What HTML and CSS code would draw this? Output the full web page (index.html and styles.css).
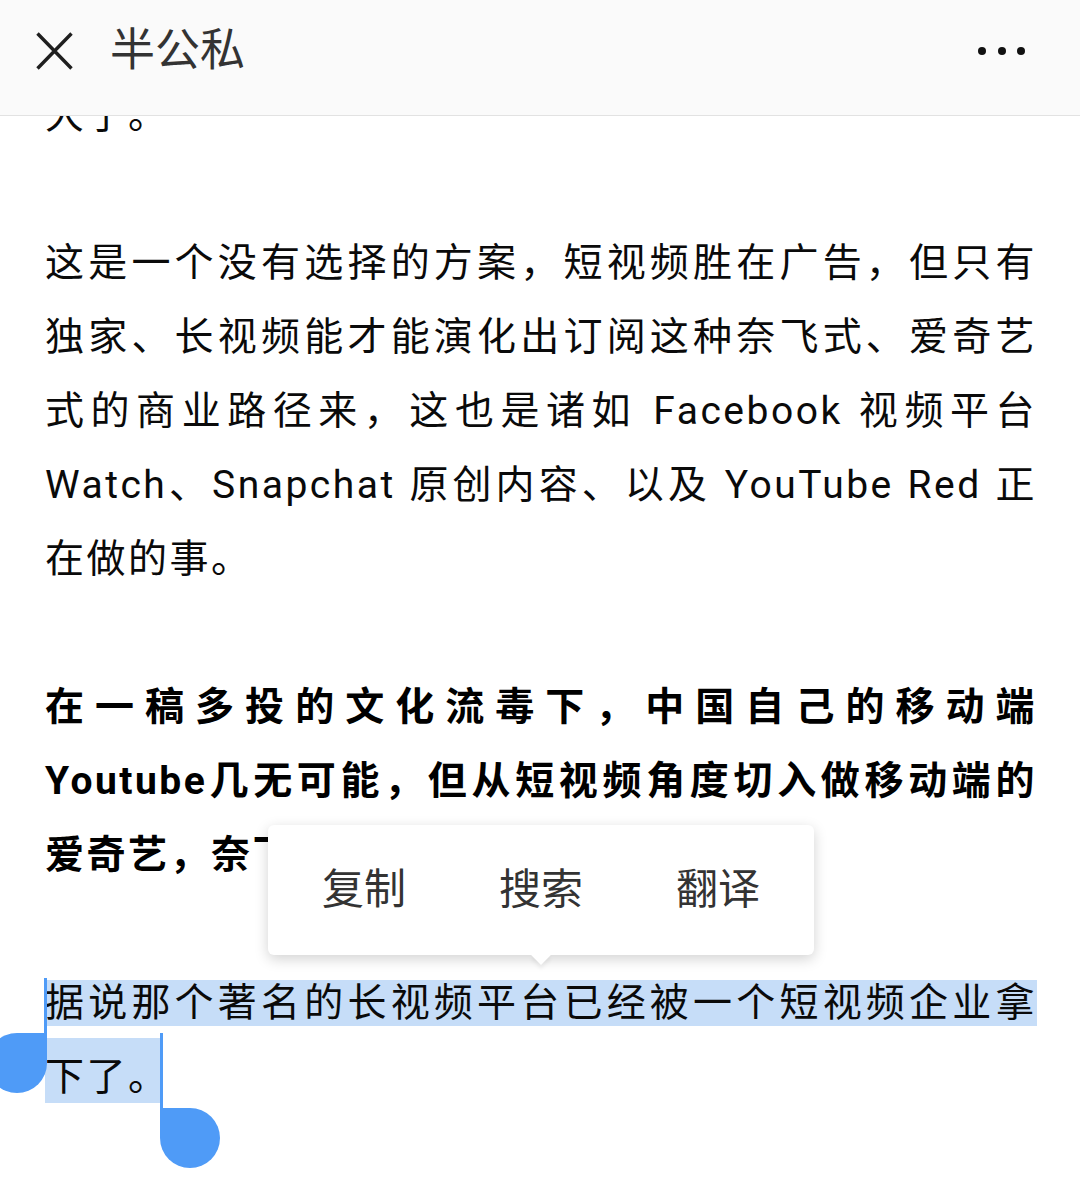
FILE: index.html
```html
<!DOCTYPE html>
<html>
<head>
    <meta charset="UTF-8">
    <title>半公私</title>
    <link rel="stylesheet" href="styles.css">
</head>
<body>
    <div class="topbar">
        <svg class="close-icon" viewBox="0 0 37 38">
            <path d="M1.5 1.5L35.5 36.5M35.5 1.5L1.5 36.5"></path>
        </svg>
        <div class="title">半公私</div>
        <div class="more"><span></span><span></span><span></span></div>
    </div>

    <div class="article">
        <p>大了。</p>

        <p>这是一个没有选择的方案，短视频胜在广告，但只有独家、长视频能才能演化出订阅这种奈飞式、爱奇艺式的商业路径来，这也是诸如 Facebook 视频平台 Watch、Snapchat 原创内容、以及 YouTube Red 正在做的事。</p>

        <p class="strong">在一稿多投的文化流毒下，中国自己的移动端Youtube几无可能，但从短视频角度切入做移动端的爱奇艺，奈飞却大有可能。</p>

        <p class="picked"><span class="sel">据说那个著名的长视频平台已经被一个短视频企业拿</span><span class="sel sel-tail">下了<span class="sel-end">。</span></span>
            <span class="handle-bar bar-start"></span>
            <span class="knob knob-start"></span>
            <span class="handle-bar bar-end"></span>
            <span class="knob knob-end"></span>
        </p>

        <div class="popup">
            <span class="popup-item">复制</span>
            <span class="popup-item">搜索</span>
            <span class="popup-item">翻译</span>
        </div>
    </div>
</body>
</html>
```

FILE: styles.css
```css
body {
    margin: 0;
    background: #fff;
    font-family: Roboto, "Noto Sans CJK SC", sans-serif;
    color: #0a0a0a;
}

.topbar {
    position: fixed;
    top: 0;
    left: 0;
    right: 0;
    z-index: 10;
    height: 101px;
    padding-bottom: 14px;
    background: #fafafa;
    border-bottom: 1px solid #e2e2e2;
    display: flex;
    align-items: center;
}

.close-icon {
    width: 37px;
    height: 38px;
    margin-left: 36px;
    fill: none;
    stroke: #1f1f1f;
    stroke-width: 3.4;
}

.title {
    margin-left: 37px;
    font-size: 45px;
    line-height: 1;
    color: #333;
}

.more {
    margin-left: auto;
    margin-right: 55px;
    display: flex;
    gap: 11.5px;
}

.more span {
    width: 8px;
    height: 8px;
    border-radius: 50%;
    background: #111;
}

.article {
    position: relative;
    padding: 78px 43px 64px 45px;
    font-size: 39px;
    line-height: 74px;
    letter-spacing: 2.5px;
    text-align: justify;
}

.article p {
    margin: 0 0 74px;
}

.article p.picked {
    margin-bottom: 0;
    position: relative;
}

.strong {
    font-weight: 700;
    color: #000;
}

/* 选中文本 */
.sel {
    background: #c6ddf8;
}

.sel-tail {
    padding: 16px 0 3px;
}

.sel-end {
    font-feature-settings: "halt";
    padding-right: 10px;
}

.handle-bar {
    position: absolute;
    width: 3px;
    background: #4f9bf7;
}

.bar-start {
    left: -1px;
    top: 12px;
    height: 58px;
}

.bar-end {
    left: 115px;
    top: 67px;
    height: 75px;
}

.knob {
    position: absolute;
    width: 60px;
    height: 60px;
    background: #4f9bf7;
}

.knob-start {
    left: -58px;
    top: 67px;
    border-radius: 50% 0 50% 50%;
}

.knob-end {
    left: 115px;
    top: 142px;
    border-radius: 0 50% 50% 50%;
}

/* 长按弹出菜单 */
.popup {
    position: absolute;
    top: 825px;
    left: 268px;
    width: 546px;
    height: 130px;
    box-sizing: border-box;
    padding: 0 54px;
    background: #fff;
    border-radius: 6px;
    box-shadow: 0 4px 14px rgba(0, 0, 0, 0.18);
    display: flex;
    align-items: center;
    gap: 93px;
    font-size: 42px;
    line-height: 1;
    letter-spacing: 0;
    color: #333;
}

.popup:after {
    content: '';
    position: absolute;
    left: 266px;
    bottom: -7px;
    width: 14px;
    height: 14px;
    background: #fff;
    transform: rotate(45deg);
    box-shadow: 3px 3px 4px rgba(0, 0, 0, 0.06);
}
```
